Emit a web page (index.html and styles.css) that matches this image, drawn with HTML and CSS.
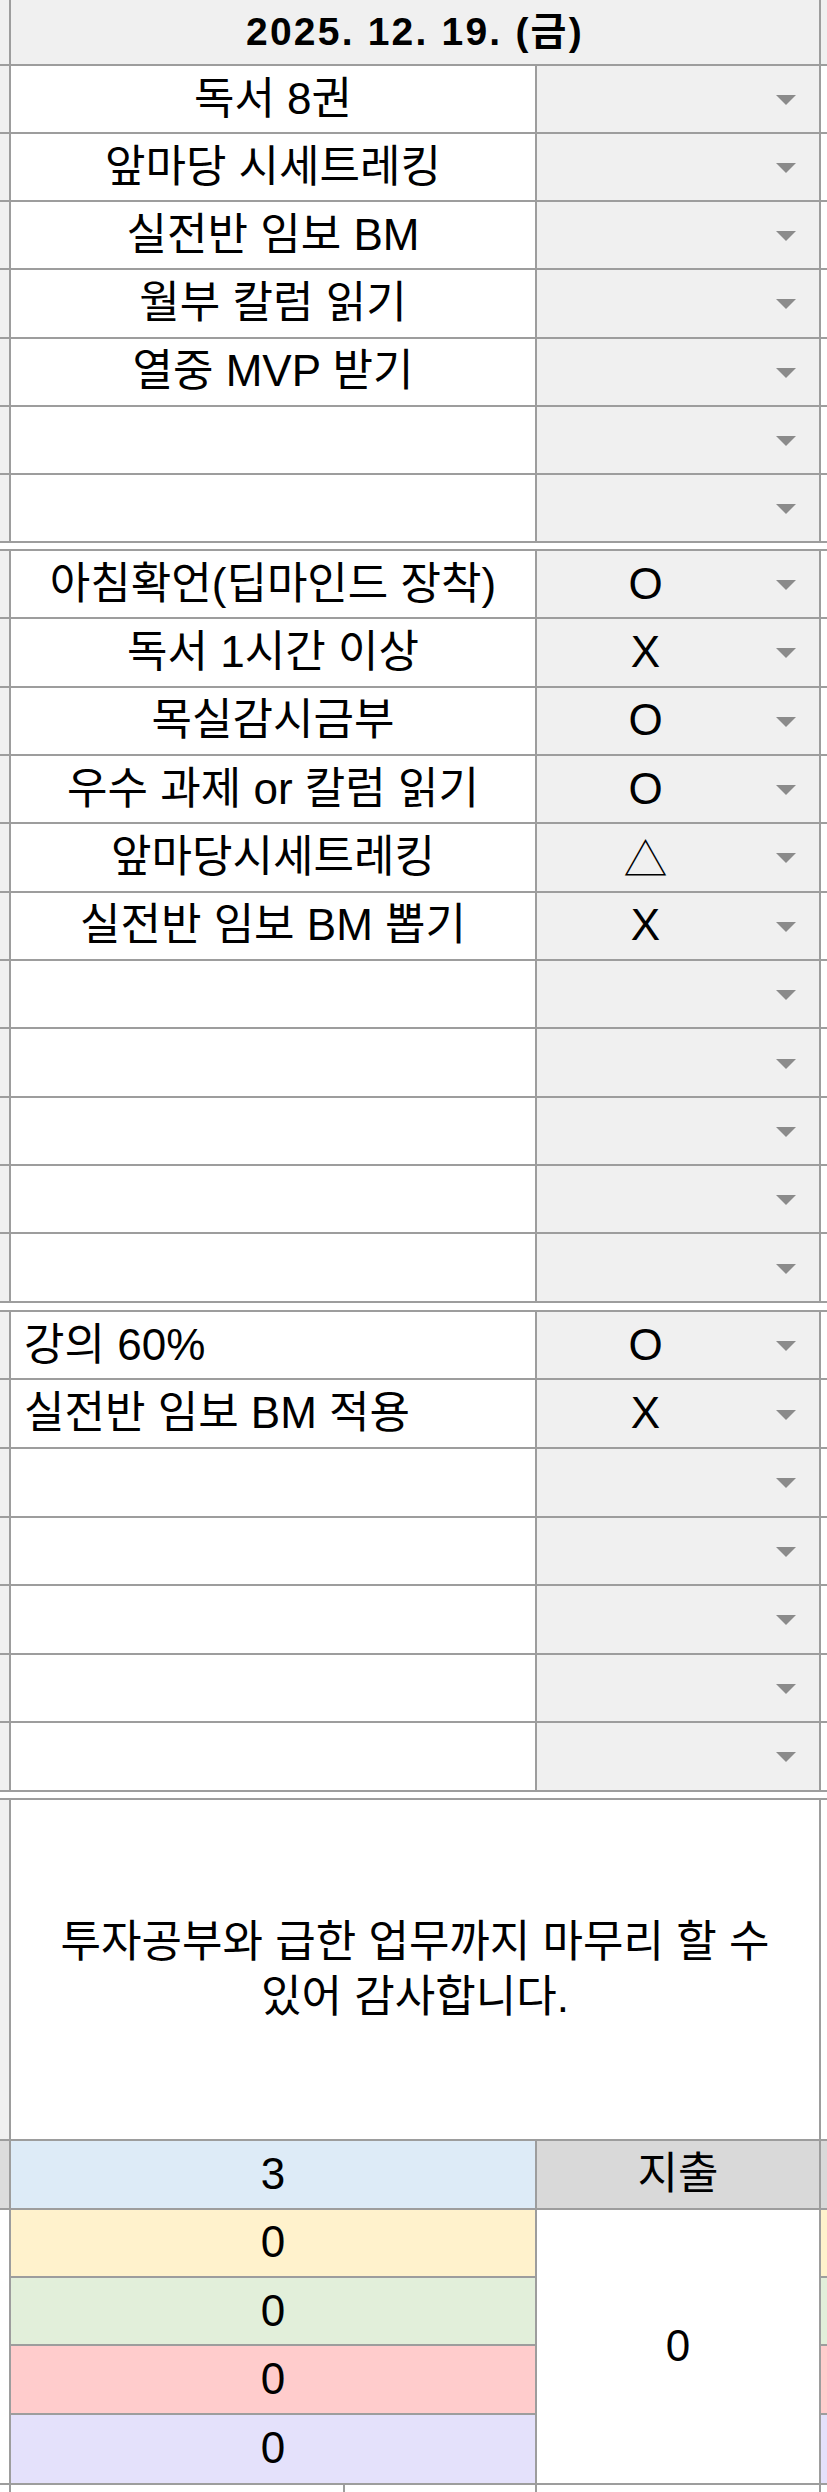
FILE: index.html
```html
<!DOCTYPE html>
<html lang="ko">
<head>
<meta charset="utf-8">
<title>2025. 12. 19. (금)</title>
<link rel="stylesheet" href="styles.css">
</head>
<body>
<div class="sheet">
  <div class="head">
    <div class="strip"></div>
    <div class="title">2025. 12. 19. (금)</div>
    <div class="strip"></div>
  </div>

  <div class="section s1">
    <div class="row"><div class="strip"></div><div class="name">독서 8권</div><div class="pick"><span class="val"></span><span class="dd"></span></div><div class="edge"></div></div>
    <div class="row"><div class="strip"></div><div class="name">앞마당 시세트레킹</div><div class="pick"><span class="val"></span><span class="dd"></span></div><div class="edge"></div></div>
    <div class="row"><div class="strip"></div><div class="name">실전반 임보 BM</div><div class="pick"><span class="val"></span><span class="dd"></span></div><div class="edge"></div></div>
    <div class="row"><div class="strip"></div><div class="name">월부 칼럼 읽기</div><div class="pick"><span class="val"></span><span class="dd"></span></div><div class="edge"></div></div>
    <div class="row"><div class="strip"></div><div class="name">열중 MVP 받기</div><div class="pick"><span class="val"></span><span class="dd"></span></div><div class="edge"></div></div>
    <div class="row"><div class="strip"></div><div class="name"></div><div class="pick"><span class="val"></span><span class="dd"></span></div><div class="edge"></div></div>
    <div class="row"><div class="strip"></div><div class="name"></div><div class="pick"><span class="val"></span><span class="dd"></span></div><div class="edge"></div></div>
  </div>

  <div class="gap g6"></div>

  <div class="section s2">
    <div class="row"><div class="strip"></div><div class="name">아침확언(딥마인드 장착)</div><div class="pick"><span class="val">O</span><span class="dd"></span></div><div class="edge"></div></div>
    <div class="row"><div class="strip"></div><div class="name">독서 1시간 이상</div><div class="pick"><span class="val">X</span><span class="dd"></span></div><div class="edge"></div></div>
    <div class="row"><div class="strip"></div><div class="name">목실감시금부</div><div class="pick"><span class="val">O</span><span class="dd"></span></div><div class="edge"></div></div>
    <div class="row"><div class="strip"></div><div class="name">우수 과제 or 칼럼 읽기</div><div class="pick"><span class="val">O</span><span class="dd"></span></div><div class="edge"></div></div>
    <div class="row"><div class="strip"></div><div class="name">앞마당시세트레킹</div><div class="pick"><span class="val tri">△</span><span class="dd"></span></div><div class="edge"></div></div>
    <div class="row"><div class="strip"></div><div class="name">실전반 임보 BM 뽑기</div><div class="pick"><span class="val">X</span><span class="dd"></span></div><div class="edge"></div></div>
    <div class="row"><div class="strip"></div><div class="name"></div><div class="pick"><span class="val"></span><span class="dd"></span></div><div class="edge"></div></div>
    <div class="row"><div class="strip"></div><div class="name"></div><div class="pick"><span class="val"></span><span class="dd"></span></div><div class="edge"></div></div>
    <div class="row"><div class="strip"></div><div class="name"></div><div class="pick"><span class="val"></span><span class="dd"></span></div><div class="edge"></div></div>
    <div class="row"><div class="strip"></div><div class="name"></div><div class="pick"><span class="val"></span><span class="dd"></span></div><div class="edge"></div></div>
    <div class="row"><div class="strip"></div><div class="name"></div><div class="pick"><span class="val"></span><span class="dd"></span></div><div class="edge"></div></div>
  </div>

  <div class="gap g7"></div>

  <div class="section s3">
    <div class="row"><div class="strip"></div><div class="name left">강의 60%</div><div class="pick"><span class="val">O</span><span class="dd"></span></div><div class="edge"></div></div>
    <div class="row"><div class="strip"></div><div class="name left">실전반 임보 BM 적용</div><div class="pick"><span class="val">X</span><span class="dd"></span></div><div class="edge"></div></div>
    <div class="row"><div class="strip"></div><div class="name left"></div><div class="pick"><span class="val"></span><span class="dd"></span></div><div class="edge"></div></div>
    <div class="row"><div class="strip"></div><div class="name left"></div><div class="pick"><span class="val"></span><span class="dd"></span></div><div class="edge"></div></div>
    <div class="row"><div class="strip"></div><div class="name left"></div><div class="pick"><span class="val"></span><span class="dd"></span></div><div class="edge"></div></div>
    <div class="row"><div class="strip"></div><div class="name left"></div><div class="pick"><span class="val"></span><span class="dd"></span></div><div class="edge"></div></div>
    <div class="row"><div class="strip"></div><div class="name left"></div><div class="pick"><span class="val"></span><span class="dd"></span></div><div class="edge"></div></div>
  </div>

  <div class="gap g6"></div>

  <div class="section s4">
    <div class="msg">
      <div class="strip"></div>
      <div class="note">투자공부와 급한 업무까지 마무리 할 수 있어 감사합니다.</div>
      <div class="edge"></div>
    </div>
    <div class="tot">
      <div class="strip gray"></div>
      <div class="blue">3</div>
      <div class="label">지출</div>
      <div class="edge gray"></div>
    </div>
    <div class="grp">
      <div class="strip white span4"></div>
      <div class="c c-or">0</div>
      <div class="merged">0</div>
      <div class="edge c-or"></div>
      <div class="c c-gr">0</div>
      <div class="edge c-gr"></div>
      <div class="c c-rd">0</div>
      <div class="edge c-rd"></div>
      <div class="c c-pu last">0</div>
      <div class="edge c-pu last"></div>
    </div>
    <div class="tail">
      <div class="strip white"></div>
      <div class="t1"></div>
      <div class="t2"></div>
      <div class="t3"></div>
      <div class="edge"></div>
    </div>
  </div>
</div>
</body>
</html>
```

FILE: styles.css
```css
* { box-sizing: border-box; }

:root {
  --line: #9d9d9d;
  --panel: #f0f0f0;
}

body {
  margin: 0;
  background: #fff;
  color: #000;
  font-family: "Liberation Sans", "Noto Sans CJK KR", sans-serif;
  font-size: 44px;
  line-height: 1.2;
}

.sheet {
  width: 827px;
  overflow: hidden;
}

.strip { background: var(--panel); }
.strip.gray { background: #dcdcdc; }
.strip.white { background: #fff; }
.edge { background: #fff; }
.edge.gray { background: #d9d9d9; }

/* header */
.head {
  display: grid;
  grid-template-columns: 9px 812px 6px;
  height: 66px;
  border-bottom: 2px solid var(--line);
}
.title {
  border-left: 2px solid var(--line);
  border-right: 2px solid var(--line);
  background: var(--panel);
  display: flex;
  align-items: center;
  justify-content: center;
  font-weight: bold;
  font-size: 39px;
  letter-spacing: 2.2px;
}

/* task rows */
.section.s2, .section.s3, .section.s4 { border-top: 2px solid var(--line); }

.row {
  display: grid;
  grid-template-columns: 9px 528px 284px 6px;
  border-bottom: 2px solid var(--line);
}
.s1 .row { height: 68.14px; }
.s2 .row { height: 68.36px; }
.s3 .row { height: 68.57px; }

.name {
  border-left: 2px solid var(--line);
  border-right: 2px solid var(--line);
  background: #fff;
  display: flex;
  align-items: center;
  justify-content: center;
  white-space: nowrap;
}
.name.left {
  justify-content: flex-start;
  padding-left: 13px;
}

.pick {
  border-right: 2px solid var(--line);
  background: var(--panel);
  display: flex;
  align-items: center;
}
.val {
  flex: 1;
  text-align: center;
  padding-right: 22px;
}
.val.tri { font-family: "Noto Sans CJK KR", sans-serif; font-weight: 300; }
.dd {
  width: 0;
  height: 0;
  border-left: 10px solid transparent;
  border-right: 10px solid transparent;
  border-top: 10px solid #8b8b8b;
  margin-right: 23px;
  margin-top: 2px;
}

.gap { background: #fff; }
.gap.g6 { height: 6px; }
.gap.g7 { height: 7px; }

/* message */
.msg {
  display: grid;
  grid-template-columns: 9px 812px 6px;
  height: 341px;
  border-bottom: 2px solid var(--line);
}
.note {
  border-left: 2px solid var(--line);
  border-right: 2px solid var(--line);
  background: #fff;
  display: flex;
  align-items: center;
  justify-content: center;
  text-align: center;
  padding: 0 30px;
  line-height: 55px;
  word-break: keep-all;
}

/* totals */
.tot {
  display: grid;
  grid-template-columns: 9px 528px 284px 6px;
  height: 69px;
  border-bottom: 2px solid var(--line);
}
.blue {
  border-left: 2px solid var(--line);
  border-right: 2px solid var(--line);
  background: #ddebf7;
  display: flex;
  align-items: center;
  justify-content: center;
}
.label {
  border-right: 2px solid var(--line);
  background: #d9d9d9;
  display: flex;
  align-items: center;
  justify-content: center;
}

.grp {
  display: grid;
  grid-template-columns: 9px 528px 284px 6px;
  grid-template-rows: repeat(4, 1fr);
  height: 275px;
  border-bottom: 2px solid var(--line);
}
.span4 { grid-row: 1 / 5; }
.c {
  grid-column: 2;
  border-left: 2px solid var(--line);
  border-right: 2px solid var(--line);
  border-bottom: 2px solid var(--line);
  display: flex;
  align-items: center;
  justify-content: center;
}
.grp .edge { grid-column: 4; border-bottom: 2px solid var(--line); }
.grp .last { border-bottom: none; }
.merged {
  grid-column: 3;
  grid-row: 1 / 5;
  border-right: 2px solid var(--line);
  background: #fff;
  display: flex;
  align-items: center;
  justify-content: center;
}
.c-or { background: #fff2cc; }
.c-gr { background: #e2efda; }
.c-rd { background: #ffcccc; }
.c-pu { background: #e4e1fb; }

.tail {
  display: grid;
  grid-template-columns: 9px 336px 192px 284px 6px;
  height: 40px;
}
.t1 { border-left: 2px solid var(--line); border-right: 2px solid var(--line); }
.t2 { border-right: 2px solid var(--line); }
.t3 { border-right: 2px solid var(--line); }
```
